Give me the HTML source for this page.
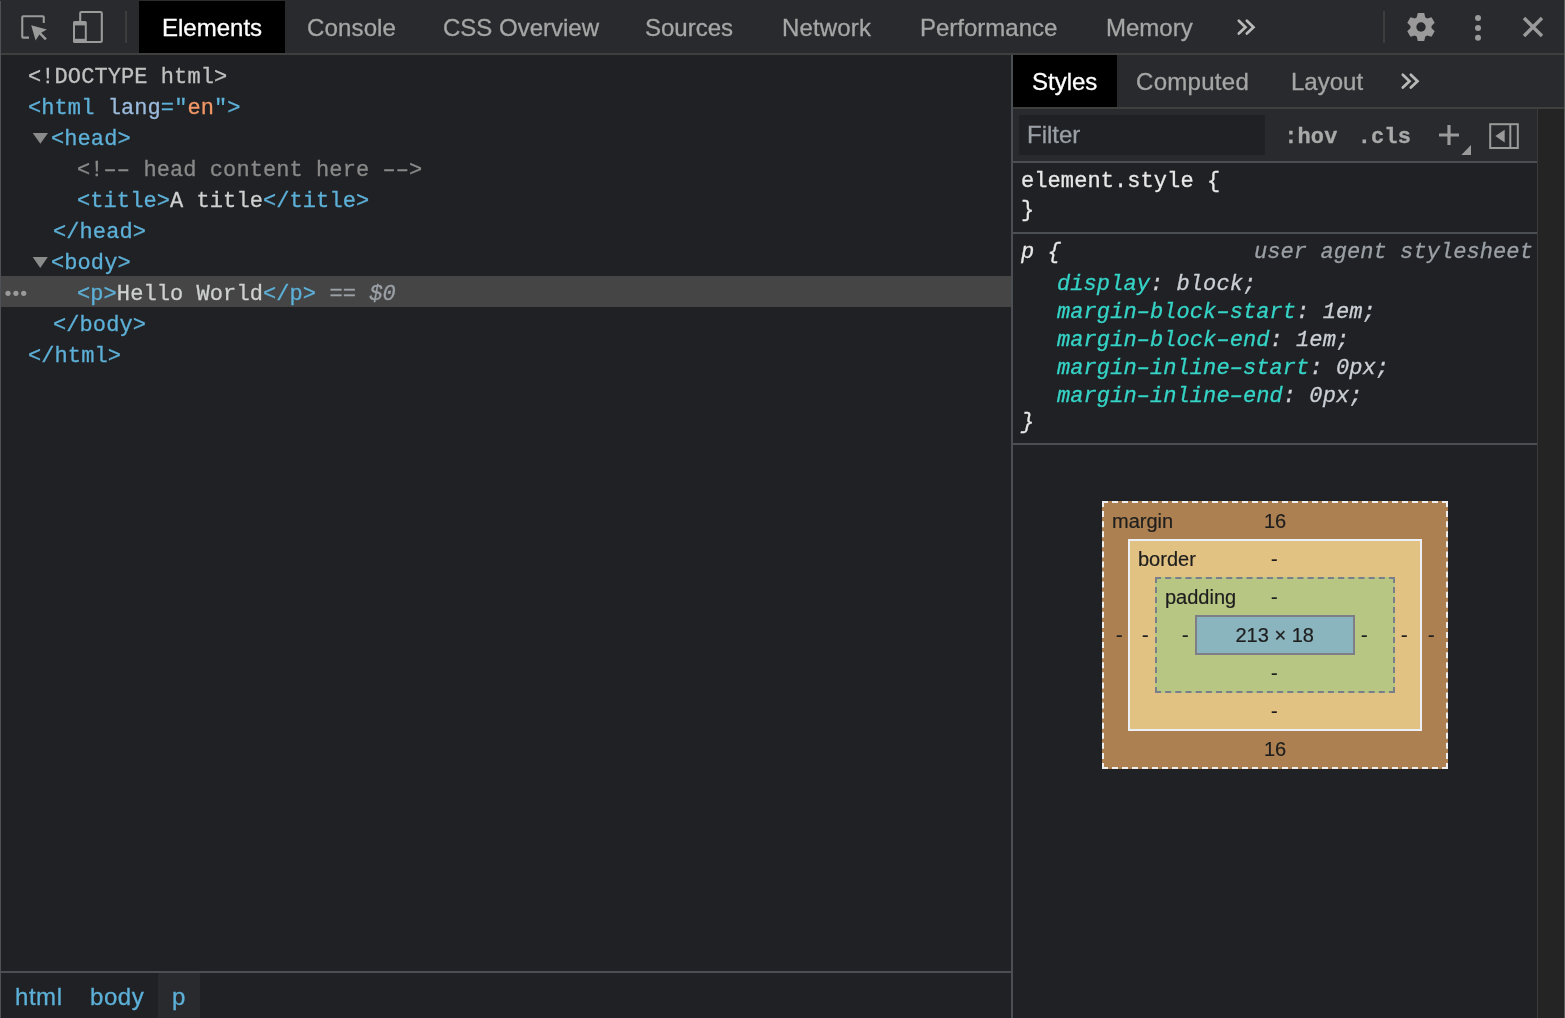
<!DOCTYPE html>
<html><head><meta charset="utf-8">
<style>
*{margin:0;padding:0;box-sizing:border-box}
html,body{width:1565px;height:1018px;overflow:hidden;background:#202124}
body{position:relative;will-change:transform;font-family:"Liberation Sans",sans-serif}
.a{position:absolute}
.ui{font-family:"Liberation Sans",sans-serif;font-size:24px;white-space:pre;line-height:30px;-webkit-text-stroke:0.3px currentColor}
.m{font-family:"Liberation Mono",monospace;font-size:22px;white-space:pre;line-height:30px;-webkit-text-stroke:0.3px currentColor;letter-spacing:0.08px}
.tab{color:#a6a6a6}
.tg{color:#5db0d7}
.an{color:#9bbbdc}
.av{color:#f29766}
.cm{color:#898989}
.tx{color:#cfd0d0}
.dt{color:#c0c0c0}
.pn{color:#35d4c7}
.pv{color:#cbd0d6}
.bm{font-family:"Liberation Sans",sans-serif;font-size:20px;color:#1e1e1e;white-space:pre;line-height:24px;-webkit-text-stroke:0.2px currentColor}
</style></head><body>
<!-- top toolbar -->
<div class="a" style="left:0;top:0;width:1565px;height:53px;background:#292a2d"></div>
<div class="a" style="left:0;top:53px;width:1565px;height:2px;background:#3f3f3e"></div>
<div class="a" style="left:139px;top:1px;width:146px;height:52px;background:#000"></div>
<div class="a" style="left:125px;top:11px;width:2px;height:32px;background:#3d3d3d"></div>
<div class="a" style="left:1383px;top:11px;width:2px;height:32px;background:#3d3d3d"></div>
<div class="a ui" style="left:162px;top:13px;color:#fff">Elements</div>
<div class="a ui tab" style="left:307px;top:13px;letter-spacing:0.15px">Console</div>
<div class="a ui tab" style="left:443px;top:13px">CSS Overview</div>
<div class="a ui tab" style="left:645px;top:13px">Sources</div>
<div class="a ui tab" style="left:782px;top:13px;letter-spacing:0.15px">Network</div>
<div class="a ui tab" style="left:920px;top:13px">Performance</div>
<div class="a ui tab" style="left:1106px;top:13px">Memory</div>

<!-- elements panel -->

<div class="a" style="left:1px;top:276px;width:1010px;height:31px;background:#454545"></div>
<div class="a m dt" style="left:28px;top:63px">&lt;!DOCTYPE html&gt;</div>
<div class="a m" style="left:28px;top:94px"><span class="tg">&lt;html</span> <span class="an">lang</span><span class="tg">="</span><span class="av">en</span><span class="tg">"&gt;</span></div>
<div class="a m tg" style="left:51px;top:125px">&lt;head&gt;</div>
<div class="a m cm" style="left:77px;top:156px">&lt;!&#8211;&#8211; head content here &#8211;&#8211;&gt;</div>
<div class="a m" style="left:77px;top:187px"><span class="tg">&lt;title&gt;</span><span class="tx">A title</span><span class="tg">&lt;/title&gt;</span></div>
<div class="a m tg" style="left:53px;top:218px">&lt;/head&gt;</div>
<div class="a m tg" style="left:51px;top:249px">&lt;body&gt;</div>
<div class="a m" style="left:77px;top:280px"><span class="tg">&lt;p&gt;</span><span class="tx">Hello World</span><span class="tg">&lt;/p&gt;</span> <span style="color:#9aa0a6">== <i>$0</i></span></div>
<div class="a m tg" style="left:53px;top:311px">&lt;/body&gt;</div>
<div class="a m tg" style="left:28px;top:342px">&lt;/html&gt;</div>

<!-- breadcrumbs -->
<div class="a" style="left:0;top:971px;width:1011px;height:2px;background:#4b4e53"></div>
<div class="a" style="left:158px;top:973px;width:42px;height:45px;background:#292a2d"></div>
<div class="a ui tg" style="left:15px;top:982px;letter-spacing:0.55px">html</div>
<div class="a ui tg" style="left:90px;top:982px;letter-spacing:0.55px">body</div>
<div class="a ui tg" style="left:172px;top:982px">p</div>

<!-- divider -->
<div class="a" style="left:1011px;top:55px;width:2px;height:963px;background:#4b4e53"></div>

<!-- styles sidebar -->
<div class="a" style="left:1013px;top:55px;width:552px;height:52px;background:#292a2d"></div>
<div class="a" style="left:1013px;top:55px;width:104px;height:52px;background:#000"></div>
<div class="a" style="left:1013px;top:107px;width:552px;height:2px;background:#3f3f3e"></div>
<div class="a ui" style="left:1032px;top:67px;color:#fff">Styles</div>
<div class="a ui tab" style="left:1136px;top:67px;letter-spacing:0.3px">Computed</div>
<div class="a ui tab" style="left:1291px;top:67px">Layout</div>
<div class="a" style="left:1013px;top:109px;width:524px;height:52px;background:#292a2d"></div>
<div class="a" style="left:1013px;top:161px;width:524px;height:2px;background:#4b4e53"></div>
<div class="a" style="left:1019px;top:115px;width:246px;height:40px;background:#202124"></div>
<div class="a ui" style="left:1027px;top:120px;color:#9aa0a6">Filter</div>
<div class="a m" style="left:1284.3px;top:123px;color:#a9a9a9;font-weight:bold;font-size:22px">:hov</div>
<div class="a m" style="left:1357.8px;top:123px;color:#a9a9a9;font-weight:bold;font-size:22px">.cls</div>
<div class="a" style="left:1537px;top:109px;width:28px;height:909px;background:#242424"></div>
<div class="a" style="left:1537px;top:109px;width:1px;height:909px;background:#3a3a3a"></div>

<div class="a m" style="left:1021px;top:167px;color:#e8e8e8">element.style {</div>
<div class="a m" style="left:1021px;top:196px;color:#e8e8e8">}</div>
<div class="a" style="left:1013px;top:232px;width:524px;height:2px;background:#4b4e53"></div>
<div class="a m" style="left:1021px;top:238px;color:#e8e8e8;font-style:italic">p {</div>
<div class="a m" style="left:1254px;top:238px;color:#9aa0a6;font-style:italic">user agent stylesheet</div>
<div class="a m" style="left:1057px;top:270px;font-style:italic"><span class="pn">display</span><span class="pv">: block;</span></div>
<div class="a m" style="left:1057px;top:298px;font-style:italic"><span class="pn">margin&#8211;block&#8211;start</span><span class="pv">: 1em;</span></div>
<div class="a m" style="left:1057px;top:326px;font-style:italic"><span class="pn">margin&#8211;block&#8211;end</span><span class="pv">: 1em;</span></div>
<div class="a m" style="left:1057px;top:354px;font-style:italic"><span class="pn">margin&#8211;inline&#8211;start</span><span class="pv">: 0px;</span></div>
<div class="a m" style="left:1057px;top:382px;font-style:italic"><span class="pn">margin&#8211;inline&#8211;end</span><span class="pv">: 0px;</span></div>
<div class="a m" style="left:1021px;top:408px;color:#e8e8e8;font-style:italic">}</div>
<div class="a" style="left:1013px;top:443px;width:524px;height:2px;background:#4b4e53"></div>

<!-- box model -->
<div class="a" style="left:1102px;top:501px;width:346px;height:268px;background:#ad8052;border:2px dashed #eeeeee"></div>
<div class="a" style="left:1128px;top:539px;width:294px;height:192px;background:#e1c283;border:2px solid #ecf0f6"></div>
<div class="a" style="left:1155px;top:577px;width:240px;height:116px;background:#b7c783;border:2px dashed #7a7e8a"></div>
<div class="a" style="left:1195px;top:615px;width:160px;height:40px;background:#8ab4be;border:2px solid #7e7f86"></div>
<div class="a bm" style="left:1112px;top:509px">margin</div>
<div class="a bm" style="left:1264px;top:509px">16</div>
<div class="a bm" style="left:1138px;top:547px">border</div>
<div class="a bm" style="left:1271px;top:547px">-</div>
<div class="a bm" style="left:1165px;top:585px">padding</div>
<div class="a bm" style="left:1271px;top:585px">-</div>
<div class="a bm" style="left:1235.5px;top:623px">213 × 18</div>
<div class="a bm" style="left:1116px;top:623px">-</div>
<div class="a bm" style="left:1142px;top:623px">-</div>
<div class="a bm" style="left:1182px;top:623px">-</div>
<div class="a bm" style="left:1361px;top:623px">-</div>
<div class="a bm" style="left:1401px;top:623px">-</div>
<div class="a bm" style="left:1428px;top:623px">-</div>
<div class="a bm" style="left:1271px;top:661px">-</div>
<div class="a bm" style="left:1271px;top:699px">-</div>
<div class="a bm" style="left:1264px;top:737px">16</div>

<!-- window edges -->
<div class="a" style="left:0;top:0;width:1565px;height:1px;background:#2b2b2d"></div>
<div class="a" style="left:0;top:1px;width:1px;height:1017px;background:#4d5156"></div>
<div class="a" style="left:1564px;top:0;width:1px;height:1018px;background:#5a5a5a"></div>
<!-- icons overlay -->
<svg class="a" style="left:0;top:0" width="1565" height="1018" viewBox="0 0 1565 1018">
 <g fill="none" stroke="#9a9a9a" stroke-width="2.1">
  <path d="M29 37.65H23.25Q22.25 37.65 22.25 36.65V17.25Q22.25 16.25 23.25 16.25H42.75Q43.75 16.25 43.75 17.25V23"/>
    <rect x="80.2" y="12" width="21.6" height="30" rx="1.2"/>
 </g>
 <path fill="#9a9a9a" d="M31.2 25.2L46.9 29.5L41.2 32.8L46.8 38.4L45 40.2L39.4 34.6L35.6 40.6Z"/>
 <rect x="73" y="21" width="13.8" height="22" rx="1.6" fill="#9a9a9a"/>
 <rect x="75" y="25.4" width="9.8" height="13.4" fill="#292a2d"/>
 <g fill="none" stroke="#b9b9b9" stroke-width="2.7" stroke-linecap="round">
  <path d="M1238.8 20.8L1245.5 27.2L1238.8 33.6"/>
  <path d="M1246.8 20.8L1253.5 27.2L1246.8 33.6"/>
  <path d="M1402.8 74.8L1409.5 81.2L1402.8 87.6"/>
  <path d="M1410.8 74.8L1417.5 81.2L1410.8 87.6"/>
 </g>
 <g fill="#9a9a9a">
  <circle cx="1421" cy="27" r="10.2"/>
  <path d="M1416.70 17.40L1417.80 13.00L1424.20 13.00L1425.30 17.40L1427.16 18.48L1431.52 17.23L1434.72 22.77L1431.46 25.92L1431.46 28.08L1434.72 31.23L1431.52 36.77L1427.16 35.52L1425.30 36.60L1424.20 41.00L1417.80 41.00L1416.70 36.60L1414.84 35.52L1410.48 36.77L1407.28 31.23L1410.54 28.08L1410.54 25.92L1407.28 22.77L1410.48 17.23L1414.84 18.48Z"/>
  <circle cx="1478" cy="18" r="3"/>
  <circle cx="1478" cy="28" r="3"/>
  <circle cx="1478" cy="37.8" r="3"/>
 </g>
 <circle cx="1421" cy="27" r="4.7" fill="#292a2d"/>
 <g stroke="#9a9a9a" stroke-width="3.4">
  <path d="M1524 18L1542 36M1542 18L1524 36"/>
 </g>
 <g fill="#8b8b8b">
  <path d="M32.7 133H48L40.35 143.7Z"/>
  <path d="M32.7 257H47.8L40.25 268.1Z"/>
 </g>
 <g fill="#9a9a9a">
  <circle cx="8" cy="293.3" r="2.6"/>
  <circle cx="15.9" cy="293.3" r="2.6"/>
  <circle cx="23.7" cy="293.3" r="2.6"/>
 </g>
 <g stroke="#9a9a9a" stroke-width="2" fill="none">
  <path d="M1439 135H1459M1449 125V145" stroke-width="3.2"/>
  <rect x="1490.2" y="124.2" width="27.6" height="23.8"/>
  <path d="M1510.3 124V149"/>
 </g>
 <path fill="#9a9a9a" d="M1461.3 155H1471V145Z"/>
 <path fill="#9a9a9a" d="M1495.3 136L1504.7 129.8V142.4Z"/>
</svg>
</body></html>
